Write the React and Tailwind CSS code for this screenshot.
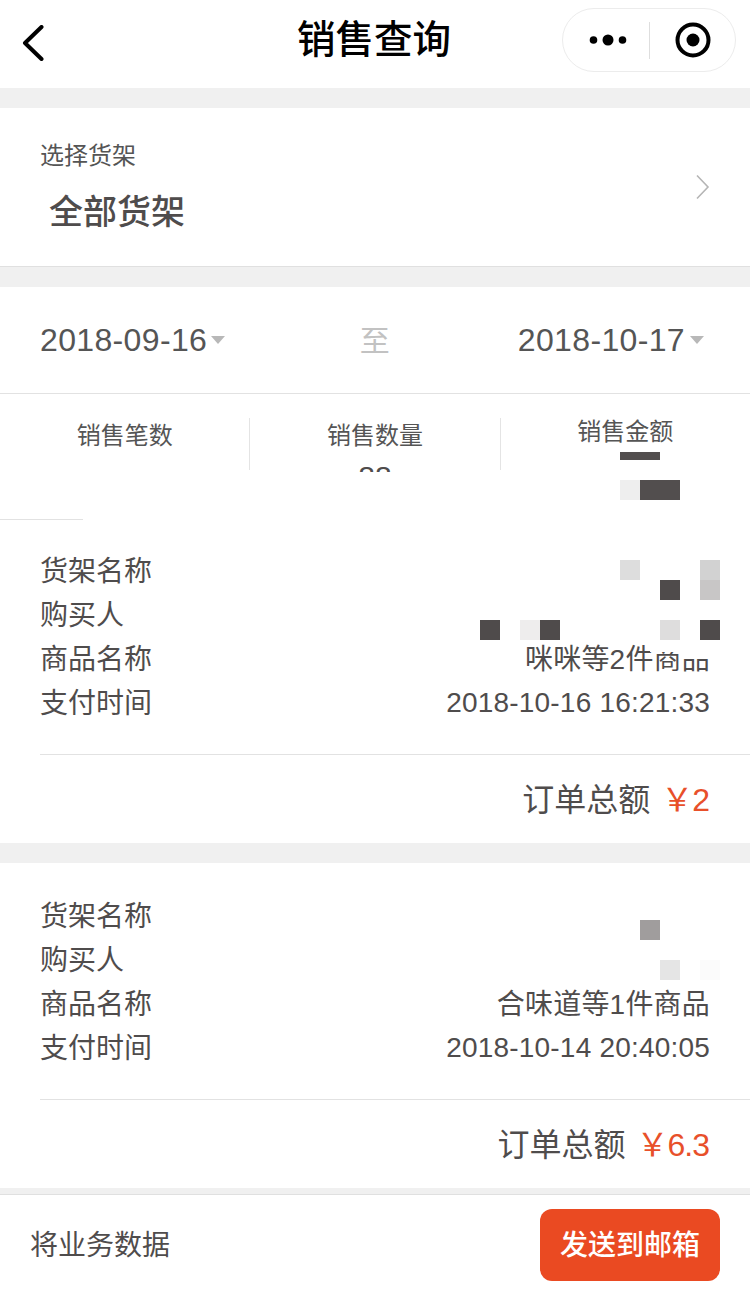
const cjk = "font-['Liberation_Sans','Noto_Sans_CJK_SC',sans-serif]"

function Row({ label, value, valueClass = '' }) {
  return (
    <div className="flex h-[44px] items-center justify-between">
      <span>{label}</span>
      <span className={`tracking-[0.2px] ${valueClass}`}>{value}</span>
    </div>
  )
}

function OrderCard({ name, buyer, goods, time, total, top }) {
  return (
    <div className="bg-white">
      <div className={`px-[40px] pb-[28px] text-[28px] text-[#4f4c4c] ${top}`}>
        <Row label="货架名称" value={name} />
        <Row label="购买人" value={buyer} />
        <Row label="商品名称" value={goods} />
        <Row label="支付时间" value={time} valueClass="pb-[2px]" />
      </div>
      <div className="ml-[40px] flex h-[89px] items-center justify-end gap-[11px] border-t border-[#e2e2e2] pr-[41px] pt-[2px] text-[32px] text-[#4f4c4c]">
        <span>订单总额</span>
        <span className="tracking-[-1px] text-[#e8502a]">{total}</span>
      </div>
    </div>
  )
}

function Stat({ label, value, className }) {
  return (
    <div className={`flex h-[52px] flex-1 flex-col items-center text-[24px] text-[#555] ${className}`}>
      <span>{label}</span>
      {value && <span className="mt-[8px] text-[30px] leading-[30px] text-[#4f4c4c]">{value}</span>}
    </div>
  )
}

export default function App() {
  return (
    <div className={`relative flex h-[1294px] flex-col overflow-hidden bg-[#f0f0f0] ${cjk}`}>
      {/* Nav bar */}
      <header className="relative flex h-[88px] shrink-0 items-center justify-center bg-white pb-[8px] pr-[2px]">
        <svg className="absolute left-[22px] top-[25px] h-[36px] w-[22px]" viewBox="0 0 22 36" fill="none" stroke="#000" strokeWidth="4" strokeLinecap="round" strokeLinejoin="round">
          <path d="M19.5 2 3 18l16.5 16" />
        </svg>
        <h1 className="text-[38.5px] font-medium leading-none text-black">销售查询</h1>
        <div className="absolute left-[562px] top-[8px] flex h-[64px] w-[174px] items-center rounded-full border border-[#ececec]">
          <svg className="ml-[26px] h-[14px] w-[38px]" viewBox="0 0 38 14" fill="#000">
            <circle cx="4.5" cy="7" r="3.8" />
            <circle cx="19" cy="7" r="5.5" />
            <circle cx="33.5" cy="7" r="3.8" />
          </svg>
          <div className="ml-[22px] h-[37px] w-px bg-[#dedede]" />
          <svg className="ml-[25px] h-[36px] w-[36px]" viewBox="0 0 36 36">
            <circle cx="18" cy="18" r="15.5" fill="none" stroke="#000" strokeWidth="4" />
            <circle cx="18" cy="18" r="6.5" fill="#000" />
          </svg>
        </div>
      </header>

      {/* Shelf picker */}
      <section className="mt-[20px] flex h-[159px] shrink-0 items-start justify-between border-b border-[#e0e0e0] bg-white pl-[40px] pr-[40px]">
        <div>
          <p className="mt-[30px] text-[24px] leading-[36px] text-[#555]">选择货架</p>
          <p className="ml-[9px] mt-[13px] text-[34px] font-medium leading-[50px] text-[#4f4c4c]">全部货架</p>
        </div>
        <svg className="mt-[66px] h-[26px] w-[14px]" viewBox="0 0 14 26" fill="none" stroke="#b5b5b5" strokeWidth="1.6">
          <path d="M1 1.5 12 13 1 24.5" />
        </svg>
      </section>

      {/* Date range */}
      <section className="mt-[20px] flex h-[107px] shrink-0 items-center border-b border-[#e2e2e2] bg-white px-[40px] text-[32px] tracking-[0.35px] text-[#555]">
        <span>2018-09-16</span>
        <span className="ml-[4px] h-0 w-0 border-x-[7px] border-t-[8px] border-x-transparent border-t-[#b8b8b8]" />
        <span className="flex-1 pl-[7px] text-center text-[30px] text-[#c2c2c2]">至</span>
        <span>2018-10-17</span>
        <span className="ml-[5px] mr-[6px] h-0 w-0 border-x-[7px] border-t-[8px] border-x-transparent border-t-[#b8b8b8]" />
      </section>

      {/* Stats, mostly masked in the picture */}
      <section className="flex h-[126px] shrink-0 flex-col bg-white">
        <div className="mt-[24px] flex h-[54px] overflow-hidden">
          <Stat label="销售笔数" className="border-r border-[#e4e4e4]" />
          <Stat label="销售数量" value="88" className="border-r border-[#e4e4e4]" />
          <Stat label="销售金额" className="-mt-[4px]" />
        </div>
        <div className="mt-[47px] h-px w-[83px] bg-[#e2e2e2]" />
      </section>

      <OrderCard top="pt-[30px]" name="" buyer="" goods="咪咪等2件商品" time="2018-10-16 16:21:33" total="￥2" />
      <div className="h-[20px] shrink-0" />
      <OrderCard top="pt-[32px]" name="" buyer="" goods="合味道等1件商品" time="2018-10-14 20:40:05" total="￥6.3" />

      {/* Bottom bar */}
      <footer className="mt-auto flex h-[100px] shrink-0 items-center justify-between border-t border-[#e0e0e0] bg-white pl-[30px] pr-[30px]">
        <span className="pt-[3px] text-[28px] text-[#4f4c4c]">将业务数据</span>
        <button className="flex h-[72px] w-[180px] items-center justify-center rounded-[12px] bg-[#ea4a22] pt-[2px] text-[28px] font-medium text-white">发送到邮箱</button>
      </footer>

      {/* Mosaic blocks laid over the masked data */}
      <div className="absolute left-[620px] top-[452px] h-[8px] w-[40px] bg-[#524e4e]" />
      <div className="absolute left-[620px] top-[480px] h-[20px] w-[20px] bg-[#eeeeee]" />
      <div className="absolute left-[640px] top-[480px] h-[20px] w-[40px] bg-[#524e4e]" />
      <div className="absolute left-[620px] top-[560px] h-[20px] w-[20px] bg-[#dddddd]" />
      <div className="absolute left-[700px] top-[560px] h-[20px] w-[20px] bg-[#d2d2d2]" />
      <div className="absolute left-[700px] top-[580px] h-[20px] w-[20px] bg-[#c8c6c6]" />
      <div className="absolute left-[660px] top-[580px] h-[20px] w-[20px] bg-[#4f4b4b]" />
      <div className="absolute left-[480px] top-[620px] h-[20px] w-[20px] bg-[#4f4b4b]" />
      <div className="absolute left-[520px] top-[620px] h-[20px] w-[20px] bg-[#eeeded]" />
      <div className="absolute left-[540px] top-[620px] h-[20px] w-[20px] bg-[#4f4b4b]" />
      <div className="absolute left-[660px] top-[620px] h-[20px] w-[20px] bg-[#dedddd]" />
      <div className="absolute left-[700px] top-[620px] h-[20px] w-[20px] bg-[#4f4b4b]" />
      <div className="absolute left-[650px] top-[640px] h-[12px] w-[30px] bg-white" />
      <div className="absolute left-[680px] top-[640px] h-[18px] w-[32px] bg-white" />
      <div className="absolute left-[640px] top-[920px] h-[20px] w-[20px] bg-[#a09d9d]" />
      <div className="absolute left-[660px] top-[960px] h-[20px] w-[20px] bg-[#e5e5e5]" />
      <div className="absolute left-[700px] top-[960px] h-[20px] w-[20px] bg-[#fbfbfb]" />
    </div>
  )
}
